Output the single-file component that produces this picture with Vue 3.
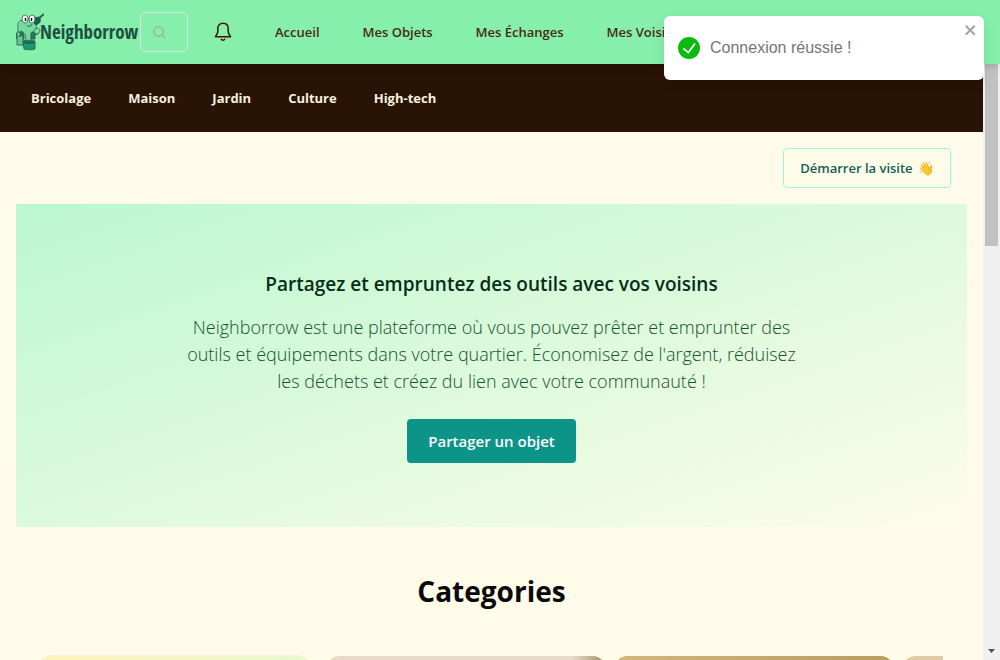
<script setup>
const links = ['Accueil', 'Mes Objets', 'Mes Échanges', 'Mes Voisins']
const topics = ['Bricolage', 'Maison', 'Jardin', 'Culture', 'High-tech']
const cards = ['lemon', 'sand', 'gold', 'wheat']
</script>

<template>
  <div class="page">
    <header class="topbar">
      <a class="logo" href="#" aria-label="Neighborrow">
        <svg class="mascot" viewBox="0 0 28 38" aria-hidden="true">
          <path d="M6 7C8 5 17 5 19 9c2 4 2 8-2 10-2 2-2 4-1 12H9c1-6 1-9-1-11-5 1-7-2-6-6C1 10 3 8 6 7z" fill="#73d9a0" stroke="#397f61" />
          <path d="M3 18c-3 2-3 5-2 8M17 20c2 2 4 2 6-1" fill="none" stroke="#2c6b50" stroke-width="1.5" />
          <path d="M19 5c4-2 6 0 5 4-2 3-5 3-6 1z" fill="#12684b" stroke="#214f3e" />
          <path d="M22 6l6-5" stroke="#315f4d" stroke-width="2" />
          <path d="M4 19c3-2 4 1 4 7H4zM15 20l4-2v8h-4z" fill="#16845e" stroke="#315c49" />
          <path d="M1 23h6v9H1z" fill="#62c695" stroke="#38694f" />
          <path d="M18 18c1-3 5-4 6-1 0 3-3 5-5 3" fill="#7ee1ab" stroke="#397f61" />
          <path d="M7 28c3-1 9-1 12 0v8c-3 1-8 1-11 0z" fill="#1c9a6c" stroke="#276c50" />
          <path d="M8 29c3 1 7 1 10 0" fill="none" stroke="#225f49" stroke-width="2" />
          <ellipse cx="9" cy="6" rx="3" ry="4" fill="#fff" stroke="#36594c" stroke-width=".8" />
          <ellipse cx="16" cy="6" rx="3" ry="4" fill="#fff" stroke="#36594c" stroke-width=".8" />
          <path d="M9.500 5v3M15.500 5v3" stroke="#121a18" stroke-width="1.500" />
          <path d="M11 12c1 2 4 2 5-1" fill="none" stroke="#205a44" />
        </svg>
        <span class="wordmark">Neighborrow</span>
      </a>
      <label class="search">
        <svg viewBox="0 0 14 14" aria-hidden="true"><circle cx="6" cy="6" r="5" /><path d="M10 10l3 3" /></svg>
        <input type="search" aria-label="Rechercher" />
      </label>
      <button class="bell" type="button" aria-label="Notifications">
        <svg viewBox="0 0 18 20" aria-hidden="true">
          <path d="M9 1.200C5.700 1.200 3.800 3.400 3.800 6.500V9.500C3.800 11.800 2.500 12.800 1.500 14.700H16.500C15.500 12.800 14.200 11.800 14.200 9.500V6.500C14.200 3.400 12.300 1.200 9 1.200Z" />
          <path d="M7.300 17.300C7.800 18.600 10.200 18.600 10.700 17.300" />
        </svg>
      </button>
      <nav class="links" aria-label="Navigation principale">
        <a v-for="link in links" :key="link" href="#">{{ link }}</a>
      </nav>
    </header>

    <div class="viewport">
      <main class="content">
        <nav class="topics" aria-label="Catégories">
          <a v-for="topic in topics" :key="topic" href="#">{{ topic }}</a>
        </nav>
        <div class="tour">
          <button class="tour-button" type="button">Démarrer la visite <span class="wave">👋</span></button>
        </div>
        <section class="hero">
          <h1>Partagez et empruntez des outils avec vos voisins</h1>
          <p>Neighborrow est une plateforme où vous pouvez prêter et emprunter des outils et équipements dans votre quartier. Économisez de l'argent, réduisez les déchets et créez du lien avec votre communauté !</p>
          <button class="share" type="button">Partager un objet</button>
        </section>
        <section class="categories">
          <h2>Categories</h2>
          <div class="carousel">
            <div v-for="card in cards" :key="card" class="card" :class="card"></div>
          </div>
        </section>
      </main>
      <div class="scrollbar" aria-hidden="true">
        <div class="thumb"></div>
        <svg viewBox="0 0 7 4"><path d="M0 0h7L3.500 4z" /></svg>
      </div>
    </div>

    <div class="toast" role="alert">
      <svg class="check" viewBox="0 0 24 24" aria-hidden="true">
        <path d="M12 0a12 12 0 1012 12A12.014 12.014 0 0012 0zm6.927 8.2l-6.845 9.289a1.011 1.011 0 01-1.43.188l-4.888-3.908a1 1 0 111.25-1.562l4.076 3.261 6.227-8.451a1 1 0 111.61 1.183z" />
      </svg>
      <span>Connexion réussie !</span>
      <button class="close" type="button" aria-label="Fermer">
        <svg viewBox="0 0 14 16" aria-hidden="true"><path d="M7.710 8.230l3.750 3.750-1.480 1.480-3.750-3.750-3.750 3.750L1 11.980l3.750-3.750L1 4.480 2.480 3l3.750 3.750L9.980 3l1.480 1.480-3.750 3.750z" /></svg>
      </button>
    </div>
  </div>
</template>

<style>
body {
  margin: 0;
  background: #fefce8;
}
</style>

<style scoped>
.page {
  position: relative;
  display: flex;
  flex-direction: column;
  height: 100vh;
  overflow: hidden;
  font-family: "Open Sans", "Noto Sans", sans-serif;
  color: #0a0a0a;
}
a {
  text-decoration: none;
  color: inherit;
}
button {
  font-family: inherit;
  cursor: pointer;
}
.topbar {
  position: relative;
  z-index: 1;
  display: flex;
  flex: none;
  align-items: center;
  height: 64px;
  padding-left: 16px;
  background: #86efac;
  box-shadow: 0 2px 8px rgba(0, 0, 0, 0.15);
}
.logo {
  display: flex;
  flex: none;
  align-items: center;
  width: 124px;
}
.mascot {
  flex: none;
  width: 28px;
  height: 38px;
  margin-right: -4px;
}
.wordmark {
  font: 700 19px/32px "Open Sans Condensed", "Roboto Condensed", "Noto Sans Condensed", Roboto, sans-serif;
  color: #1f4f40;
}
.search {
  display: flex;
  flex: none;
  align-items: center;
  box-sizing: border-box;
  width: 48px;
  height: 40px;
  padding: 0 12px;
  border: 1px solid #d9e5dc;
  border-radius: 4px;
}
.search svg {
  flex: none;
  width: 13px;
  height: 13px;
  fill: none;
  stroke: #92b0a0;
  stroke-width: 1.3;
}
.search input {
  width: 100%;
  min-width: 0;
  padding: 0;
  border: 0;
  outline: 0;
  background: transparent;
}
.bell {
  flex: none;
  display: flex;
  margin-left: 26px;
  padding: 0;
  border: 0;
  background: none;
}
.bell svg {
  width: 18px;
  height: 20px;
  fill: none;
  stroke: #431407;
  stroke-width: 1.5;
  stroke-linecap: round;
  stroke-linejoin: round;
}
.links {
  display: flex;
  gap: 43px;
  margin-left: 43px;
  font-size: 13px;
  font-weight: 600;
  color: #4a2a12;
  white-space: nowrap;
}
.viewport {
  display: flex;
  flex: 1;
  min-height: 0;
}
.content {
  flex: 1;
  min-width: 0;
  overflow: hidden;
  background: #fefce8;
}
.topics {
  display: flex;
  align-items: center;
  gap: 37px;
  height: 68px;
  padding: 0 31px;
  background: #291305;
  color: #f8f0dc;
  font-size: 13px;
  font-weight: 700;
}
.tour {
  display: flex;
  justify-content: flex-end;
  padding: 16px 32px;
}
.tour-button {
  height: 40px;
  padding: 0 16px;
  border: 1px solid #99f6e4;
  border-radius: 4px;
  background: transparent;
  color: #115e59;
  font-size: 13px;
  font-weight: 600;
}
.wave {
  margin-left: 2px;
}
.hero {
  display: flex;
  flex-direction: column;
  align-items: center;
  margin: 0 16px;
  padding: 64px 16px;
  background: linear-gradient(to bottom right, #bbf7d0, #fefce8);
  text-align: center;
}
.hero h1 {
  margin: 0 0 14px;
  font-size: 19px;
  line-height: 32px;
  font-weight: 600;
  color: #052e16;
}
.hero p {
  max-width: 620px;
  margin: 0 0 24px;
  font-size: 18px;
  line-height: 27px;
  font-weight: 300;
  color: #14532d;
}
.share {
  height: 44px;
  padding: 0 21px;
  border: 0;
  border-radius: 4px;
  background: #0d9488;
  color: #fff;
  font-size: 15px;
  font-weight: 600;
}
.categories h2 {
  margin: 40px 0;
  font-size: 28px;
  line-height: 48px;
  font-weight: 700;
  text-align: center;
}
.carousel {
  display: flex;
  gap: 10px;
  height: 280px;
  margin: 0 40px;
  padding-top: 1px;
  overflow: hidden;
}
.card {
  flex: none;
  width: 278px;
  border-radius: 12px;
}
.lemon {
  width: 270px;
  margin-right: 7px;
  background: linear-gradient(to right, #fef3b8, #e8f8cf);
  box-shadow: 0 0 2px rgba(0, 0, 0, 0.15);
}
.sand {
  background: linear-gradient(to right, #e8dac6, #e8dcc8 88%, #a3936b);
}
.gold {
  background: linear-gradient(to right, #d2b77e, #b79d60);
}
.wheat {
  background: #dfcca7;
}
.scrollbar {
  display: flex;
  flex-direction: column;
  align-items: center;
  justify-content: space-between;
  flex: none;
  box-sizing: border-box;
  width: 17px;
  padding-bottom: 7px;
  background: #f0f0f0;
}
.thumb {
  width: 13px;
  height: 182px;
  background: #c1c1c1;
}
.scrollbar svg {
  width: 7px;
  height: 4px;
  fill: #505050;
}
.toast {
  position: absolute;
  z-index: 2;
  top: 16px;
  right: 16px;
  display: flex;
  align-items: center;
  gap: 10px;
  box-sizing: border-box;
  width: 320px;
  height: 64px;
  padding: 0 14px;
  border-radius: 6px;
  background: #fff;
  box-shadow: 0 4px 12px rgba(0, 0, 0, 0.1);
  color: #757575;
  font: 16px/20px "Liberation Sans", Arial, sans-serif;
}
.check {
  width: 22px;
  height: 22px;
  fill: #07bc0c;
}
.close {
  position: absolute;
  top: 6px;
  right: 6px;
  display: flex;
  padding: 0;
  border: 0;
  background: none;
  opacity: 0.35;
}
.close svg {
  width: 14px;
  height: 16px;
}
</style>
